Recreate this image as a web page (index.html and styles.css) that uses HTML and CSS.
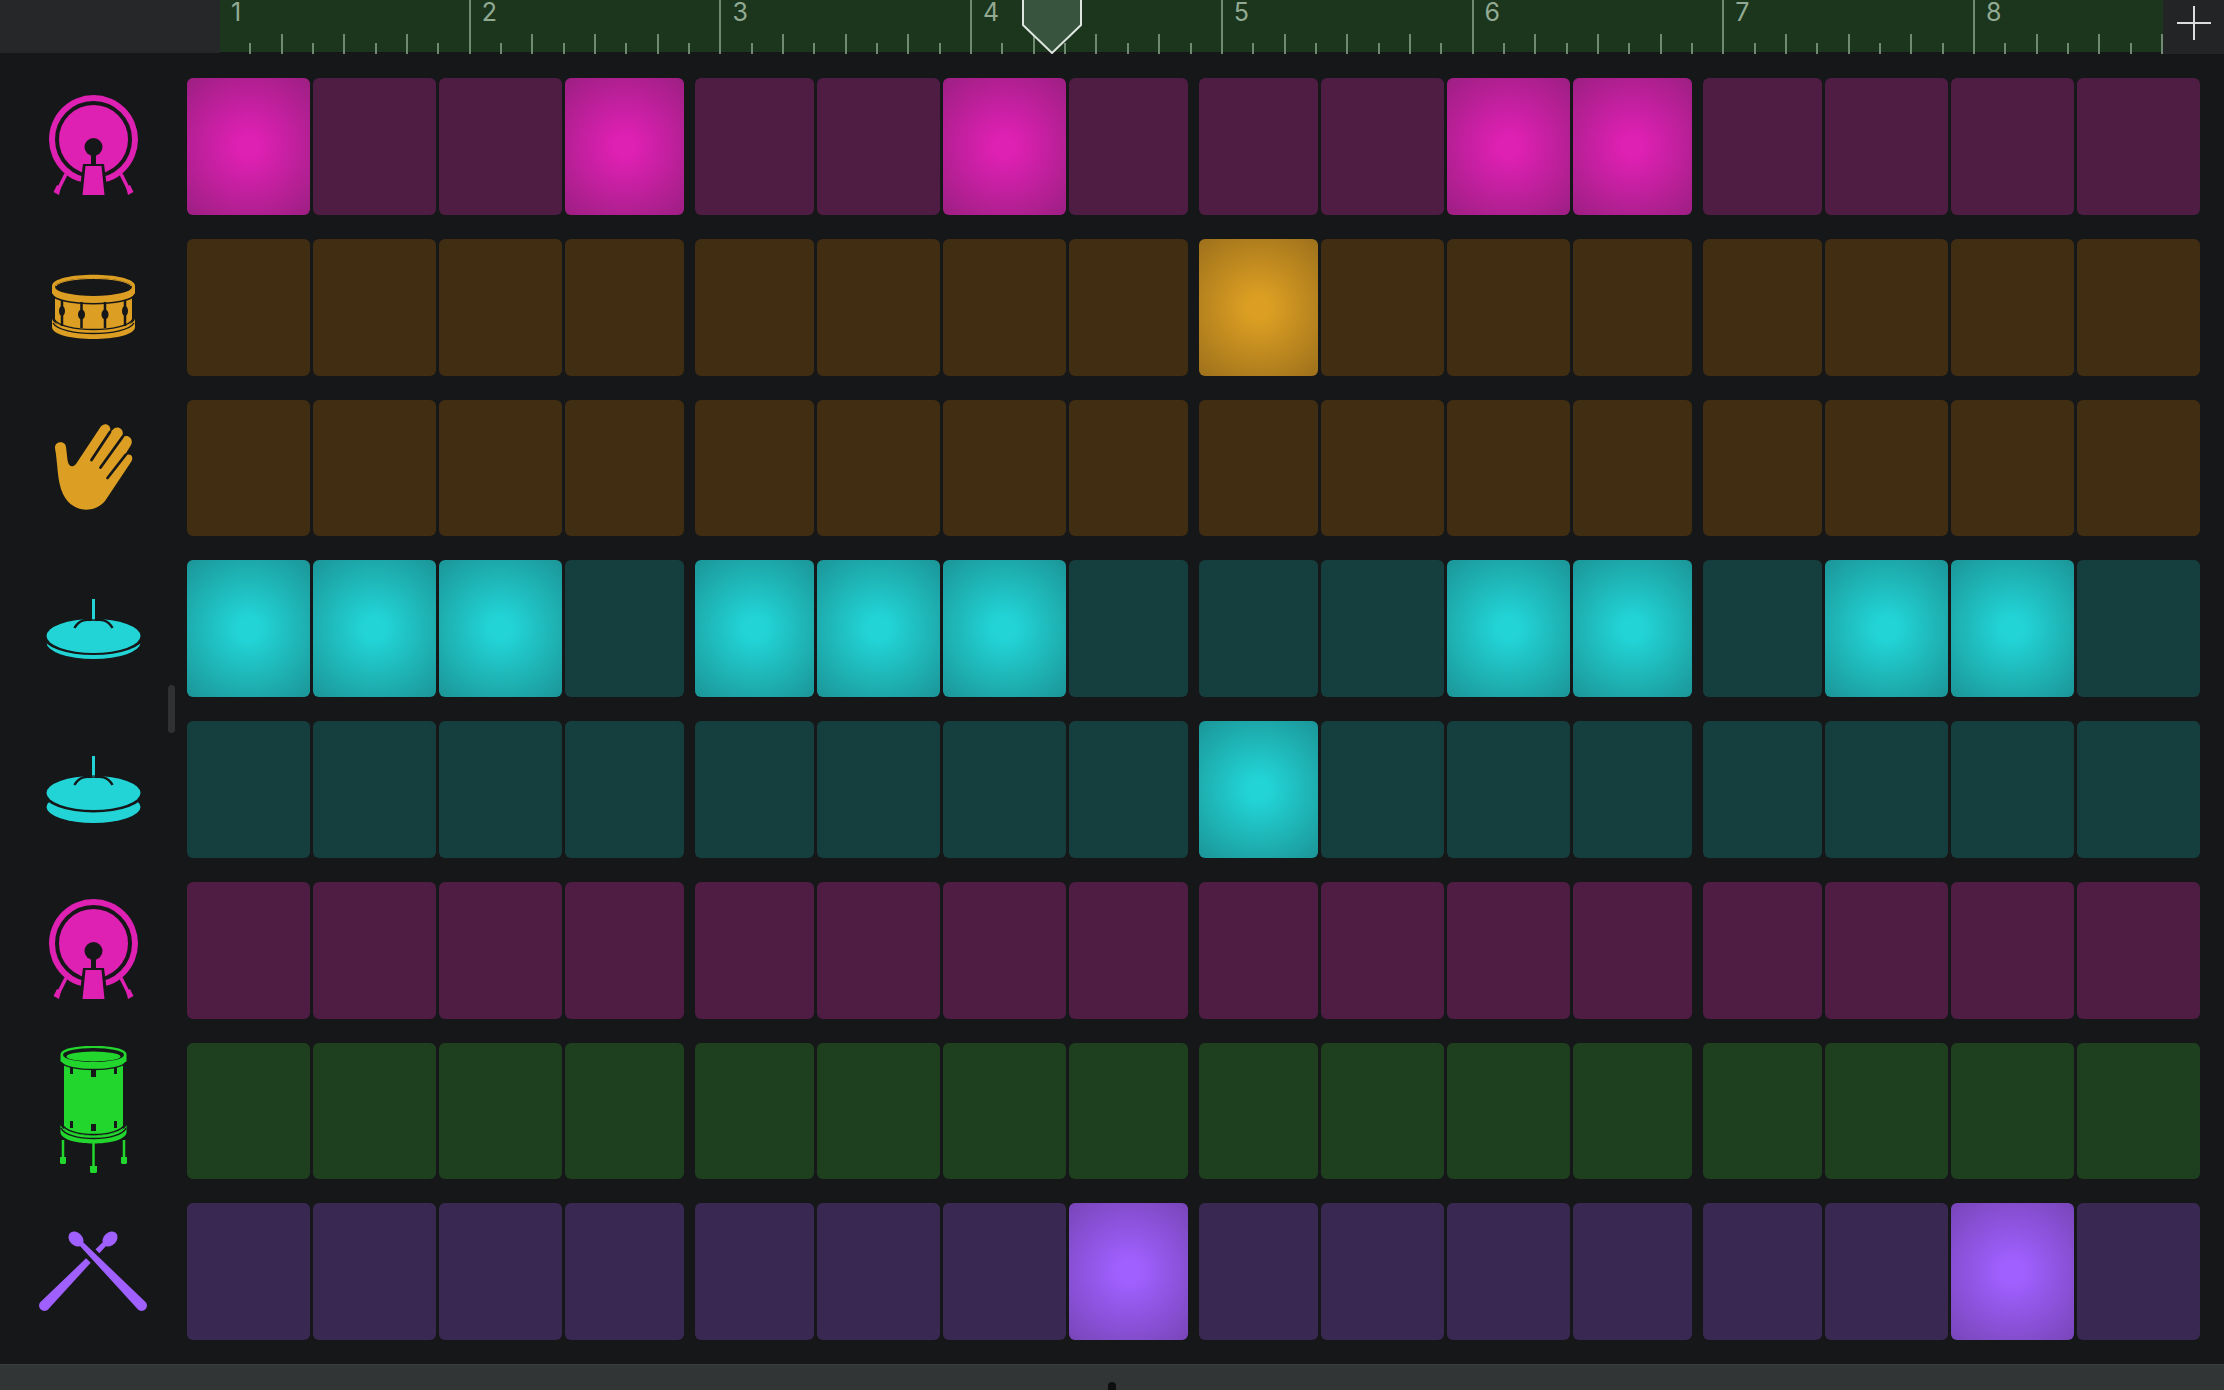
FILE: index.html
```html
<!DOCTYPE html>
<html lang="en">
<head>
<meta charset="utf-8">
<title>Beat Sequencer</title>
<link rel="stylesheet" href="styles.css">
</head>
<body>
<svg class="symbols" aria-hidden="true">
  <symbol id="kick" viewBox="-1 1 130 130">
    <path class="thick" d="M36 94 28.500 109M91 94 98.500 109" stroke-width="3.500"/>
    <path d="M27 105 31 107 29 115 23.500 112ZM100 105 96 107 98 115 103.500 112Z"/>
    <circle cx="63.500" cy="59.500" r="44.500"/>
    <circle class="cut-line" cx="63.500" cy="59.500" r="36.500" stroke-width="4"/>
    <path class="cut" d="M61 70H66V84H74L78 116H49L53 84H61Z"/>
    <circle class="cut" cx="63.500" cy="67" r="9"/>
    <path d="M55.500 86H71.500L74.500 115H52.500Z"/>
  </symbol>
  <symbol id="snare" viewBox="-1 -8 130 130">
    <path d="M25 46V70C25 85 102 85 102 70V46Z"/>
    <path d="M22 68C22 84 105 84 105 68V77C105 93 22 93 22 77Z"/>
    <path class="cut-line" d="M24 69C31 83 96 83 103 69" stroke-width="1.500"/>
    <path class="cut-line" d="M23 73C31 87 96 87 104 73" stroke-width="1.500"/>
    <path d="M22 36C22 21 105 21 105 36V43C105 57 22 57 22 43Z"/>
    <path class="cut-line" d="M22 44C25 57 102 57 105 44" stroke-width="1.500"/>
    <ellipse class="cut" cx="63.500" cy="37" rx="38.500" ry="9"/>
    <path class="fine" d="M26 36C32 26 95 26 101 36" stroke-width="1"/>
    <path class="cut-line" d="M32 50V76M51.500 52V78M75 52V78M95 50V76" stroke-width="2.500"/>
    <g class="cut"><ellipse cx="32" cy="61" rx="3" ry="5"/><ellipse cx="51.500" cy="64.500" rx="3.500" ry="5"/><ellipse cx="75" cy="64.500" rx="3.500" ry="5"/><ellipse cx="95" cy="61" rx="3" ry="5"/></g>
  </symbol>
  <symbol id="clap" viewBox="-1 -2 130 130">
    <path d="M25 43C24.500 36 35.500 35 36 42L37.500 55C38.500 62 42.500 63 46 59L70.500 22C75 16 83 21 79.500 28L82.500 25C87 19 95.500 24.500 92 31L88.500 37 91 34C96 27 104.500 33 101 40L93 53C99 46 105 51 101 57L75 96C64 109 42 108 33 89C27 76 28 60 25 43Z"/>
    <path class="cut-line round" d="M80 27 61.500 55M92.500 32 70.500 62.500M95.500 50 77.500 73" stroke-width="2.800"/>
  </symbol>
  <symbol id="hat-closed" viewBox="-1 -16 130 130">
    <path class="thick" d="M63.500 19V40" stroke-width="3"/>
    <ellipse cx="63.500" cy="62.500" rx="47" ry="16.500"/>
    <ellipse class="cut" cx="63.500" cy="57" rx="50" ry="18"/>
    <ellipse cx="63.500" cy="56" rx="47" ry="17"/>
    <path class="cut-line" d="M44.500 48C49 40 57 38 63.500 41C70 38 78 40 82.500 48" stroke-width="2.500"/>
    <path d="M47 49C53 38 74 38 80 49Z"/>
  </symbol>
  <symbol id="hat-open" viewBox="-1 -15 130 130">
    <path class="thick" d="M63.500 17V38" stroke-width="3"/>
    <ellipse cx="63.500" cy="68" rx="47" ry="16"/>
    <ellipse class="cut" cx="63.500" cy="55" rx="50" ry="18.500"/>
    <ellipse cx="63.500" cy="54" rx="47" ry="17"/>
    <path class="cut-line" d="M44.500 46C49 38 57 36 63.500 39C70 36 78 38 82.500 46" stroke-width="2.500"/>
    <path d="M47 47C53 36 74 36 80 47Z"/>
  </symbol>
  <symbol id="tom" viewBox="-1 16 130 130">
    <path class="thick" d="M33 110V130M63.500 112V137M94 110V130" stroke-width="2.500"/>
    <path d="M30 127H36V133L35 134H31L30 133ZM91 127H97V133L96 134H92L91 133ZM60 136H67V142L66 143H61L60 142Z"/>
    <path d="M34 34H93V98C90 108 37 108 34 98Z"/>
    <path d="M30.500 95C36 109 91 109 96.500 95V103C93 117 34 117 30.500 103Z"/>
    <path class="cut-line" d="M32 94C38 108 89 108 95 94M31 98C37 112 90 112 96 98" stroke-width="1.500"/>
    <path d="M30.500 24C31 13 96 13 96.500 24V31C94 41 33 41 30.500 31Z"/>
    <path class="cut-line" d="M31 32C36 42 91 42 96 32" stroke-width="1.500"/>
    <ellipse class="cut" cx="63.500" cy="25" rx="30.500" ry="7"/>
    <ellipse cx="63.500" cy="26.500" rx="27" ry="5"/>
    <path class="cut" d="M40 37H43V44H40ZM61 39H66V47H61ZM84 37H87V44H84ZM40 91H43V98H40ZM61 94H66V101H61ZM84 91H87V98H84Z"/>
  </symbol>
  <symbol id="sticks" viewBox="-1 -4 130 130">
    <g transform="matrix(-1 0 0 1 126 0)">
      <ellipse cx="46" cy="28" rx="8.500" ry="6.500" transform="rotate(45 46 28)"/>
      <path d="M50 35 53.500 31.500 115.500 91C120 96 113 103 108 98.500Z"/>
    </g>
    <path class="cut-line" d="M56 38 108 90" stroke-width="13"/>
    <ellipse cx="46" cy="28" rx="8.500" ry="6.500" transform="rotate(45 46 28)"/>
    <path d="M50 35 53.500 31.500 115.500 91C120 96 113 103 108 98.500Z"/>
  </symbol>
</svg>

<header class="ruler">
  <div class="corner"></div>
  <div class="timeline">
    <div class="bars" id="bars"></div>
    <svg class="playhead" viewBox="0 0 60 54" role="img" aria-label="Playhead"><path d="M1-2V25L30 53 59 25V-2Z"/></svg>
  </div>
  <button class="add" type="button" aria-label="Add section">
    <svg viewBox="0 0 34 34"><path d="M17 0V34M0 17H34"/></svg>
  </button>
</header>

<main class="tracks" id="tracks">
  <div class="grip"></div>
</main>

<footer class="dock"><span class="handle"></span></footer>
<script src="sequencer.js"></script>
</body>
</html>
```
FILE: styles.css
```css
* { box-sizing: border-box; }

body {
  display: flex;
  flex-direction: column;
  min-height: 100vh;
  margin: 0;
  background: #161719;
  font-family: Inter, "Liberation Sans", sans-serif;
}

.symbols { display: none; }

.ruler {
  display: flex;
  height: 54px;
}

.corner {
  flex: none;
  width: 220px;
  height: 53px;
  background: #262729;
}

.timeline {
  position: relative;
  flex: 1;
  height: 54px;
}

.bars {
  display: flex;
  height: 54px;
  background: linear-gradient(#1b361d 52px, #161719 52px);
}

.bar {
  display: flex;
  position: relative;
  flex: 8;
  align-items: flex-end;
}

.bar:last-child { flex: 6; }

.bar-number {
  position: absolute;
  top: -3px;
  left: 11px;
  color: #92aa93;
  font-size: 25px;
  line-height: 30px;
}

.tick {
  flex: 1;
  height: 11px;
  border-right: 2px solid #6f8a70;
}

.tick:nth-of-type(even) { height: 20px; }
.tick:nth-of-type(8) { height: 54px; }

.playhead {
  position: absolute;
  top: 0;
  left: calc(43% - 33px);
  width: 60px;
  height: 54px;
  fill: #38543f;
  stroke: #dde5de;
  stroke-width: 2;
}

.add {
  display: grid;
  place-items: center;
  flex: none;
  width: 61px;
  height: 54px;
  padding: 0 0 8px;
  border: 0;
  background: #232426;
}

.add svg {
  width: 34px;
  height: 34px;
  fill: none;
  stroke: #dcdcdc;
  stroke-width: 2;
}

.tracks {
  display: grid;
  position: relative;
  flex: 1;
  grid-auto-rows: 1fr;
  gap: 24px;
  padding: 24px 24px 24px 0;
}

.track { display: flex; }

.instrument {
  display: flex;
  align-items: center;
  justify-content: center;
  flex: none;
  width: 187px;
  padding: 0;
  border: 0;
  background: none;
}

.instrument svg {
  flex: none;
  width: 130px;
  height: 130px;
  fill: var(--on);
}

.cut { fill: #161719; }
.cut-line { fill: none; stroke: #161719; }
.thick, .fine { fill: none; stroke: var(--on); }
.round { stroke-linecap: round; }

.steps {
  display: grid;
  flex: 1;
  grid-template-columns: repeat(16, 1fr);
  gap: 3px;
}

.step {
  margin: 0;
  border-radius: 6px;
  background: var(--off);
  appearance: none;
  cursor: pointer;
}

.step:nth-child(4n):not(:last-child) { margin-right: 4px; }
.step:nth-child(4n + 1):not(:first-child) { margin-left: 4px; }

.step:checked {
  background: radial-gradient(circle farthest-corner, var(--on) 12%, var(--edge) 100%);
}

.pink { --on: #de20b3; --edge: #9c1f82; --off: #4f1c44; }
.amber { --on: #dc9f23; --edge: #9d701b; --off: #402d12; }
.teal { --on: #22d4d6; --edge: #1b9597; --off: #153f3e; }
.green { --on: #22d62d; --edge: #1b9624; --off: #1e401f; }
.violet { --on: #a060ff; --edge: #7845b8; --off: #392852; }

.grip {
  position: absolute;
  top: calc(50% - 24px);
  left: 168px;
  width: 7px;
  height: 48px;
  border-radius: 4px;
  background: #303133;
}

.dock {
  display: flex;
  justify-content: center;
  height: 26px;
  padding-top: 17px;
  border-top: 1px solid #3c3f40;
  background: #323536;
}

.handle {
  width: 8px;
  height: 8px;
  border-radius: 4px 4px 0 0;
  background: #0d0e0f;
}
```
FILE: sequencer.js
```js
// Each pattern holds sixteen steps: x plays, a dot rests.
const tracks = [
  { name: "Kick", icon: "kick", color: "pink", pattern: "x..x..x...xx...." },
  { name: "Snare", icon: "snare", color: "amber", pattern: "........x......." },
  { name: "Clap", icon: "clap", color: "amber", pattern: "................" },
  { name: "Closed hi-hat", icon: "hat-closed", color: "teal", pattern: "xxx.xxx...xx.xx." },
  { name: "Open hi-hat", icon: "hat-open", color: "teal", pattern: "........x......." },
  { name: "Low kick", icon: "kick", color: "pink", pattern: "................" },
  { name: "Floor tom", icon: "tom", color: "green", pattern: "................" },
  { name: "Sticks", icon: "sticks", color: "violet", pattern: ".......x......x." }
];

const bars = document.getElementById("bars");
for (let n = 1; n <= 8; n++) {
  const ticks = '<i class="tick"></i>'.repeat(n < 8 ? 8 : 6);
  bars.insertAdjacentHTML("beforeend", `<div class="bar"><span class="bar-number">${n}</span>${ticks}</div>`);
}

const list = document.getElementById("tracks");
for (const t of tracks) {
  const steps = [...t.pattern].map((s, i) =>
    `<input class="step" type="checkbox" aria-label="${t.name} step ${i + 1}"${s === "x" ? " checked" : ""}>`
  ).join("");
  list.insertAdjacentHTML("beforeend", `
    <section class="track ${t.color}">
      <button class="instrument" type="button" aria-label="${t.name}">
        <svg><use href="#${t.icon}"/></svg>
      </button>
      <div class="steps">${steps}</div>
    </section>`);
}
```
